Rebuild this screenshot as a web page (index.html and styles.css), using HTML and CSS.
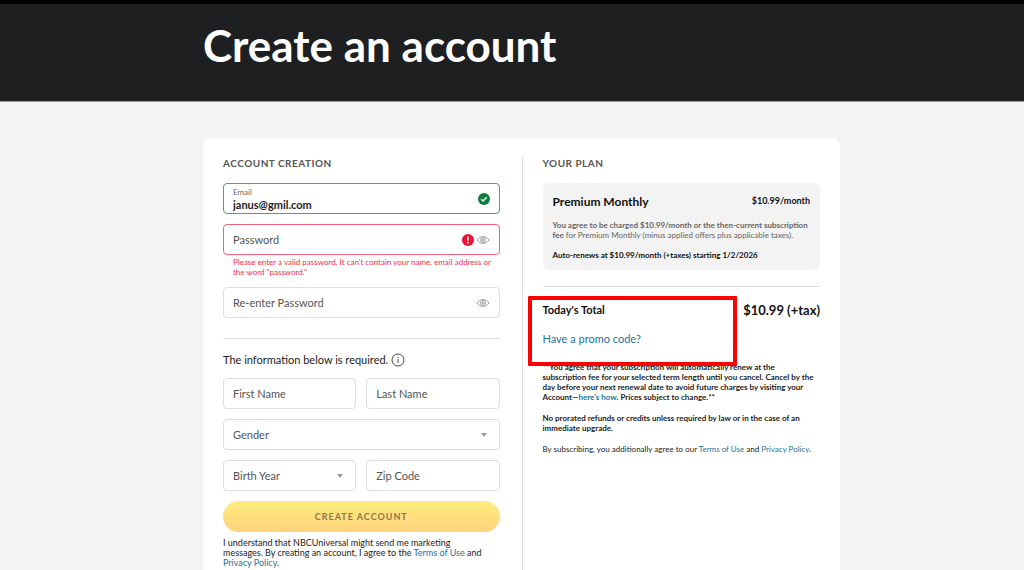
FILE: index.html
```html
<!DOCTYPE html>
<html lang="en">
<head>
    <meta charset="UTF-8">
    <meta name="viewport" content="width=device-width, initial-scale=1.0">
    <title>Create an account</title>
    <link rel="stylesheet" href="styles.css">
</head>
<body>
    <header class="page-header">
        <h1>Create an account</h1>
    </header>

    <main class="page-main">
        <div class="card">
            <form class="account" novalidate>
                <h2>ACCOUNT CREATION</h2>

                <div class="field field-valid">
                    <div class="field-stack">
                        <label for="email">Email</label>
                        <input type="email" id="email" value="janus@gmil.com">
                    </div>
                    <svg class="status-icon" viewBox="0 0 12 12" aria-hidden="true">
                        <circle cx="6" cy="6" r="6" fill="#0b7f3b"/>
                        <path d="M3.2 6.2l1.9 1.9 3.7-3.9" fill="none" stroke="#fff" stroke-width="1.4"/>
                    </svg>
                </div>

                <div class="field field-error">
                    <input type="password" id="password" placeholder="Password" aria-label="Password" aria-describedby="password-error">
                    <svg class="status-icon" viewBox="0 0 12 12" aria-hidden="true">
                        <circle cx="6" cy="6" r="6" fill="#ee1136"/>
                        <path d="M6 2.5v4.3M6 8v1.5" stroke="#fff" stroke-width="1.5"/>
                    </svg>
                    <svg class="eye-icon" viewBox="0 0 14 10" aria-hidden="true">
                        <path d="M1 5c3-4.500 9-4.500 12 0c-3 4.500-9 4.500-12 0z"/>
                        <circle cx="7" cy="5" r="2.400"/>
                        <circle cx="7" cy="5" r="0.800"/>
                    </svg>
                </div>
                <p class="error" id="password-error">Please enter a valid password. It can't contain your name, email address or the word "password."</p>

                <div class="field">
                    <input type="password" id="password2" placeholder="Re-enter Password" aria-label="Re-enter Password">
                    <svg class="eye-icon" viewBox="0 0 14 10" aria-hidden="true">
                        <path d="M1 5c3-4.500 9-4.500 12 0c-3 4.500-9 4.500-12 0z"/>
                        <circle cx="7" cy="5" r="2.400"/>
                        <circle cx="7" cy="5" r="0.800"/>
                    </svg>
                </div>

                <hr>

                <p class="required">
                    The information below is required.
                    <svg class="info-icon" viewBox="0 0 14 14" aria-hidden="true">
                        <circle cx="7" cy="7" r="6" fill="none" stroke="#444" stroke-width="1"/>
                        <path d="M7 6v4M7 3.800v1.200" stroke="#444" stroke-width="1"/>
                    </svg>
                </p>

                <div class="field-grid">
                    <div class="field">
                        <input type="text" id="first-name" placeholder="First Name" aria-label="First Name">
                    </div>
                    <div class="field">
                        <input type="text" id="last-name" placeholder="Last Name" aria-label="Last Name">
                    </div>
                    <div class="field field-wide">
                        <select id="gender" aria-label="Gender"><option>Gender</option></select>
                        <svg class="caret" viewBox="0 0 8 4" aria-hidden="true"><path d="M1 0h6L4 4z" fill="#999"/></svg>
                    </div>
                    <div class="field">
                        <select id="birth-year" aria-label="Birth Year"><option>Birth Year</option></select>
                        <svg class="caret" viewBox="0 0 8 4" aria-hidden="true"><path d="M1 0h6L4 4z" fill="#999"/></svg>
                    </div>
                    <div class="field">
                        <input type="text" id="zip" placeholder="Zip Code" aria-label="Zip Code">
                    </div>
                </div>

                <button type="submit" class="btn-create">CREATE ACCOUNT</button>

                <p class="consent">I understand that NBCUniversal might send me marketing messages. By creating an account, I agree to the <a href="#">Terms of Use</a> and <a href="#">Privacy Policy</a>.</p>
            </form>

            <section class="plan">
                <h2>YOUR PLAN</h2>

                <div class="plan-box">
                    <div class="plan-head">
                        <h3>Premium Monthly</h3>
                        <span class="plan-price">$10.99/month</span>
                    </div>
                    <p class="plan-terms"><strong>You agree to be charged $10.99/month or the then-current subscription fee</strong> for Premium Monthly (minus applied offers plus applicable taxes).</p>
                    <p class="plan-renew">Auto-renews at $10.99/month (+taxes) starting 1/2/2026</p>
                </div>

                <hr>

                <div class="total">
                    <div class="total-row">
                        <span class="total-label">Today's Total</span>
                        <span class="total-price">$10.99 (+tax)</span>
                    </div>
                    <a class="promo" href="#">Have a promo code?</a>
                    <div class="highlight"></div>
                </div>

                <div class="legal">
                    <p class="legal-bold">**You agree that your subscription will automatically renew at the subscription fee for your selected term length until you cancel. Cancel by the day before your next renewal date to avoid future charges by visiting your Account—<a href="#">here's how</a>. Prices subject to change.**</p>
                    <p class="legal-bold">No prorated refunds or credits unless required by law or in the case of an immediate upgrade.</p>
                    <p>By subscribing, you additionally agree to our <a href="#">Terms of Use</a> and <a href="#">Privacy Policy</a>.</p>
                </div>
            </section>
        </div>
    </main>
</body>
</html>
```
FILE: styles.css
```css
* {
    box-sizing: border-box;
}
body {
    margin: 0;
    min-height: 100vh;
    display: flex;
    flex-direction: column;
    background-color: #f3f3f3;
    color: #222;
    font-family: Lato, "Liberation Sans", sans-serif;
    font-size: 10px;
}
h1, h2, h3, p {
    margin: 0;
}
a {
    color: #1c759c;
    text-decoration: none;
}
hr {
    width: 100%;
    margin: 0;
    border: 0;
    border-top: 1px solid #ddd;
}
.page-header {
    padding: 16px 20px 30px 39px;
    border-top: 4px solid #000;
    border-bottom: 1px solid #999;
    background-color: #1e1f21;
    color: #fff;
}
.page-header h1 {
    max-width: 637px;
    margin: 0 auto;
    font-size: 44px;
    line-height: 51px;
    font-weight: 700;
}
.page-main {
    flex: 1;
    display: flex;
    padding: 36px 20px 0 39px;
}
.card {
    flex: 1;
    max-width: 637px;
    margin: 0 auto;
    padding: 19px 20px 0;
    display: grid;
    grid-template-columns: 1fr 1fr;
    border-radius: 8px 8px 0 0;
    background-color: #fff;
}
.account {
    padding-right: 22px;
}
.plan {
    padding-left: 20px;
    border-left: 1px solid #ddd;
}
h2 {
    margin-bottom: 14px;
    color: #555;
    font-size: 10px;
    line-height: 12px;
    letter-spacing: 0.05em;
}

/* Form fields */
.field {
    display: flex;
    align-items: center;
    gap: 2px;
    height: 31px;
    min-width: 0;
    padding: 0 9px;
    border: 1px solid #ddd;
    border-radius: 4px;
    background-color: #fff;
}
.field input,
.field select {
    flex: 1;
    width: 100%;
    min-width: 0;
    padding: 0;
    border: 0;
    outline: 0;
    background: none;
    appearance: none;
    color: #555;
    font-family: inherit;
    font-size: 11px;
    line-height: 14px;
}
.field input::placeholder {
    color: #555;
    opacity: 1;
}
.field-valid {
    margin-bottom: 10px;
    border-color: #4aa56c;
}
.field-stack {
    flex: 1;
    display: flex;
    flex-direction: column;
}
.field-stack label {
    color: #666;
    font-size: 8px;
    line-height: 12px;
}
.field-stack input {
    color: #222;
    font-weight: 700;
}
.field-error {
    border-color: #f55f79;
}
.status-icon {
    width: 12px;
    height: 12px;
}
.eye-icon {
    width: 14px;
    height: 10px;
    fill: none;
    stroke: #999;
}
.caret {
    width: 8px;
    height: 4px;
    margin-right: 2px;
}
.error {
    padding: 2px 0 10px 10px;
    color: #f12d4f;
    font-size: 8px;
    line-height: 10px;
}
.account hr {
    margin: 20px 0 14px;
}
.required {
    display: flex;
    align-items: center;
    gap: 3px;
    margin-bottom: 11px;
    font-size: 11px;
    line-height: 14px;
}
.info-icon {
    width: 14px;
    height: 14px;
}
.field-grid {
    display: grid;
    grid-template-columns: 1fr 1fr;
    gap: 10px;
}
.field-wide {
    grid-column: span 2;
}
.btn-create {
    width: 100%;
    height: 31px;
    margin: 10px 0 6px;
    border: 0;
    border-radius: 16px;
    background: linear-gradient(#ffed80, #ffd27c);
    color: #8a774c;
    font-family: inherit;
    font-size: 9px;
    font-weight: 700;
    letter-spacing: 1px;
}
.consent {
    padding-right: 10px;
    font-size: 9px;
    line-height: 10px;
}

/* Plan summary */
.plan-box {
    margin-bottom: 16px;
    padding: 12px 10px 10px;
    border-radius: 6px;
    background-color: #f3f3f3;
}
.plan-head {
    display: flex;
    justify-content: space-between;
    margin-bottom: 11px;
    color: #111;
    line-height: 14px;
}
.plan-head h3 {
    font-size: 12px;
}
.plan-price {
    font-size: 9px;
    line-height: 12px;
    font-weight: 700;
}
.plan-terms {
    margin-bottom: 10px;
    color: #666;
    font-size: 8px;
    line-height: 10px;
}
.plan-renew {
    color: #111;
    font-size: 8px;
    line-height: 10px;
    font-weight: 700;
}
.total {
    position: relative;
    padding: 15px 0 16px;
}
.total-row {
    display: flex;
    justify-content: space-between;
    align-items: center;
    margin-bottom: 14px;
    color: #111;
    font-weight: 700;
    line-height: 16px;
}
.total-label {
    font-size: 11px;
}
.total-price {
    font-size: 13px;
}
.promo {
    display: block;
    font-size: 11px;
    line-height: 14px;
}
.highlight {
    position: absolute;
    top: 9px;
    left: -15px;
    right: 83px;
    height: 70px;
    border: 4px solid #fe0000;
    border-radius: 1px;
}
.legal {
    font-size: 8px;
    line-height: 10px;
}
.legal p {
    margin-bottom: 11px;
}
.legal-bold {
    font-weight: 700;
}
```
